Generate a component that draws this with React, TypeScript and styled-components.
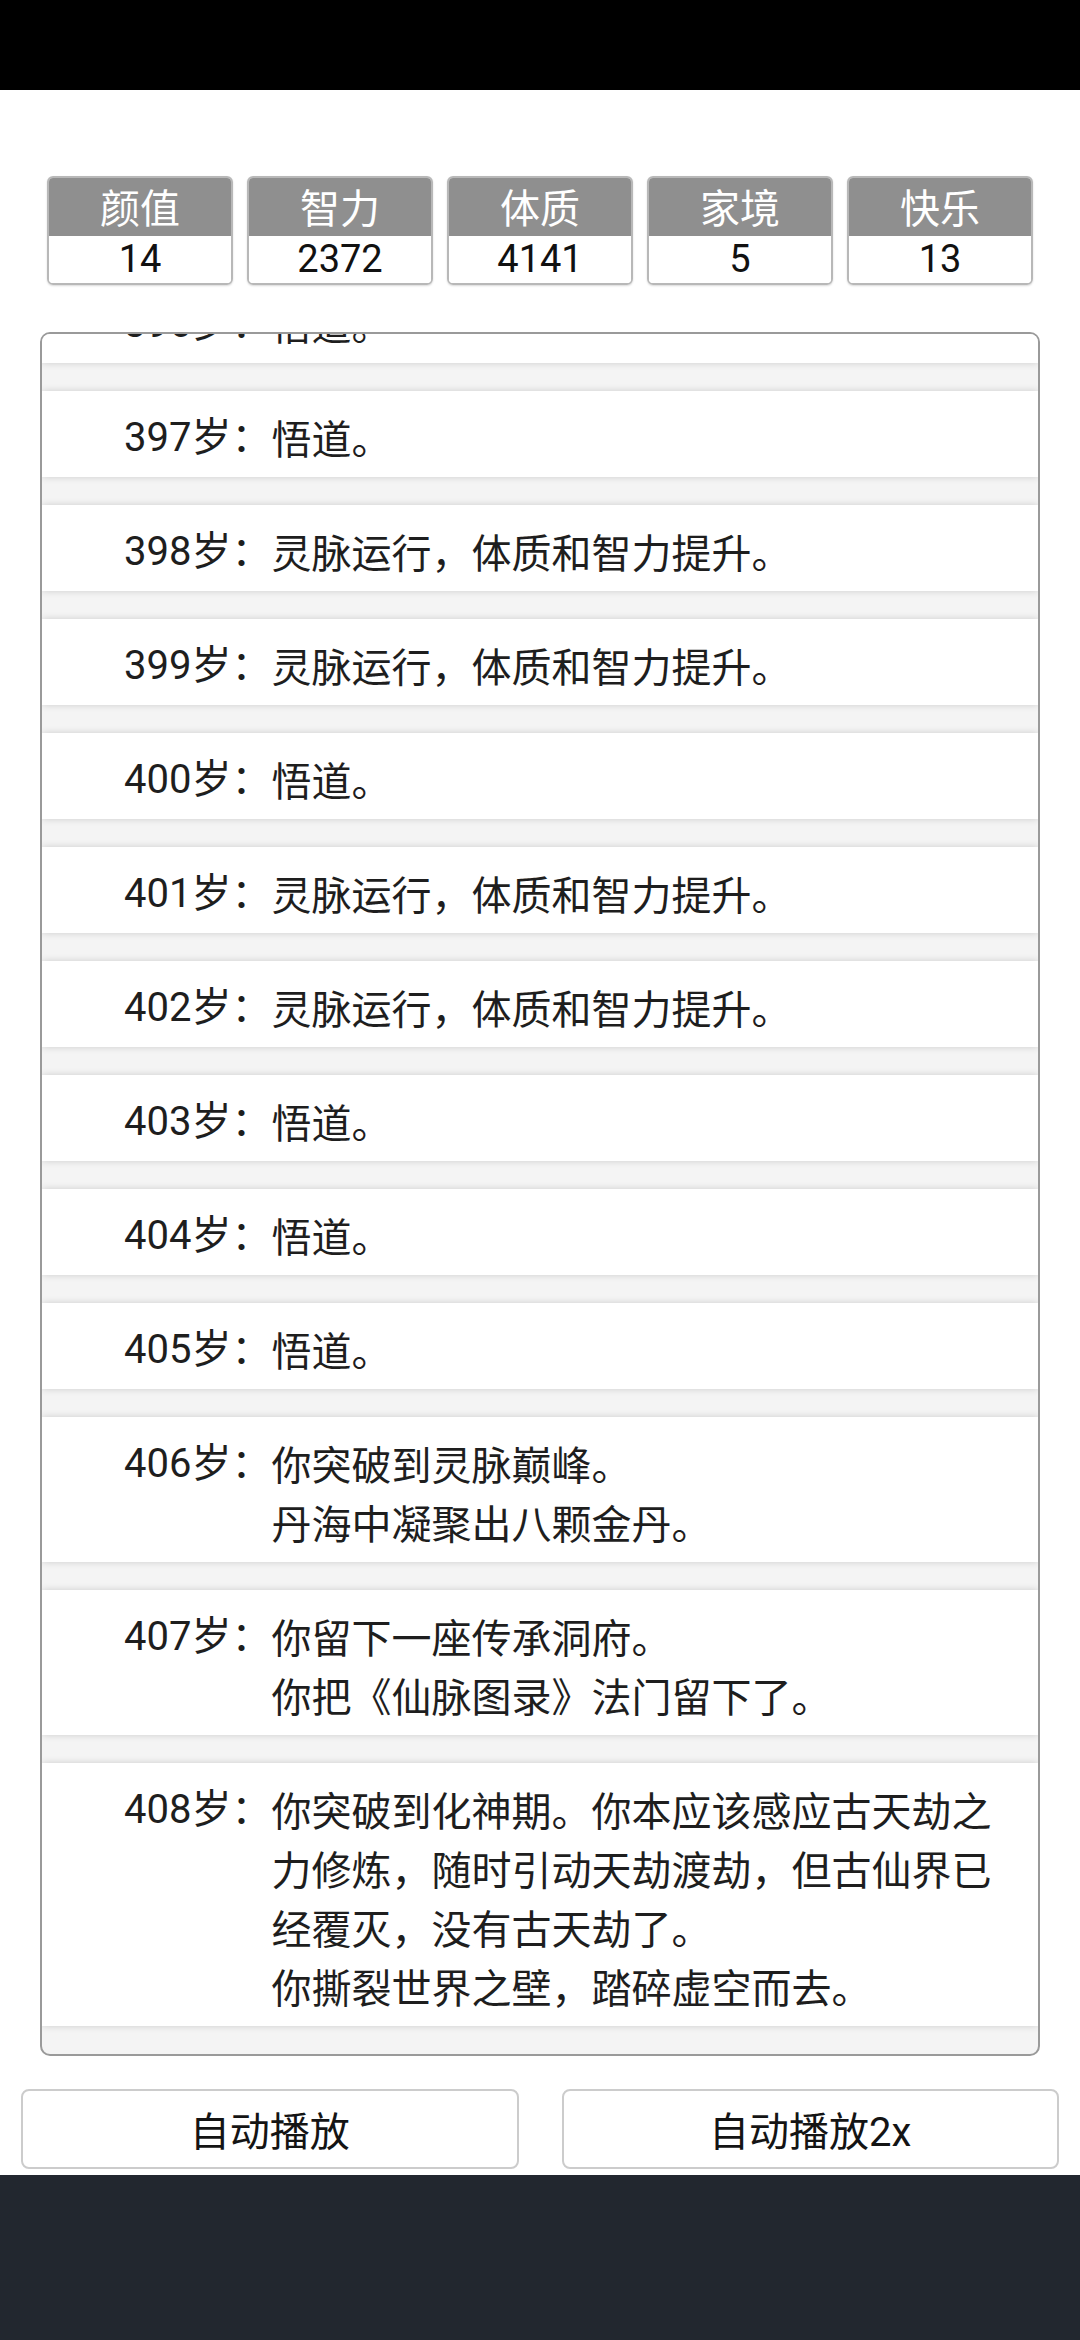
import React from "react";
import styled, { createGlobalStyle } from "styled-components";

const Global = createGlobalStyle`
  html, body { margin: 0; padding: 0; background: #ffffff; }
  body { font-family: Roboto, "Noto Sans CJK SC", "Noto Sans", sans-serif; }
  * { box-sizing: border-box; }
`;

const Page = styled.div`
  width: 1080px;
  height: 2340px;
  display: flex;
  flex-direction: column;
  background: #ffffff;
  overflow: hidden;
`;

const StatusBar = styled.div`
  height: 90px;
  flex: none;
  background: #000000;
`;

const StatsRow = styled.div`
  margin-top: 86px;
  padding: 0 47px;
  display: grid;
  grid-template-columns: repeat(5, 1fr);
  gap: 14px;
  flex: none;
`;

const StatBox = styled.div`
  height: 109px;
  border: 2px solid #b8b8b8;
  border-radius: 6px;
  overflow: hidden;
  display: flex;
  flex-direction: column;
  box-shadow: 0 1px 2px rgba(0, 0, 0, 0.15);
`;

const StatHead = styled.div`
  height: 58px;
  background: #8f8f8f;
  color: #ffffff;
  font-size: 40px;
  line-height: 56px;
  text-align: center;
  font-family: "Noto Sans CJK SC", sans-serif;
`;

const StatValue = styled.div`
  flex: 1;
  background: #ffffff;
  color: #111111;
  font-size: 38px;
  line-height: 47px;
  text-align: center;
  font-family: Roboto, "Noto Sans", sans-serif;
`;

const Panel = styled.div`
  margin: 47px 40px 0;
  height: 1724px;
  flex: none;
  border: 2px solid #9a9a9a;
  border-radius: 10px;
  background: #f4f4f4;
  overflow: hidden;
  display: flex;
  flex-direction: column;
  justify-content: flex-end;
  padding-bottom: 28px;
`;

const Entry = styled.div`
  flex: none;
  background: #ffffff;
  padding: 17px 20px 10px 82px;
  display: flex;
  font-size: 40px;
  line-height: 59px;
  color: #1e1e1e;
  box-shadow: 0 0 7px rgba(0, 0, 0, 0.16);
  & + & {
    margin-top: 28px;
  }
`;

const Age = styled.div`
  flex: none;
  white-space: nowrap;
  font-family: Roboto, "Noto Sans CJK SC", sans-serif;
`;

const Body = styled.div`
  flex: 1;
  font-family: "Noto Sans CJK SC", sans-serif;
`;

const Line = styled.div``;

const ButtonRow = styled.div`
  margin-top: 33px;
  padding: 0 21px;
  display: grid;
  grid-template-columns: 1fr 1fr;
  gap: 43px;
  flex: none;
`;

const Button = styled.button`
  height: 80px;
  background: #ffffff;
  border: 2px solid #cccccc;
  border-radius: 8px;
  font-size: 40px;
  color: #141414;
  font-family: Roboto, "Noto Sans CJK SC", sans-serif;
  padding: 0;
`;

const Footer = styled.div`
  margin-top: 6px;
  flex: 1;
  background: #22272f;
`;

const stats = [
  { name: "颜值", value: 14 },
  { name: "智力", value: 2372 },
  { name: "体质", value: 4141 },
  { name: "家境", value: 5 },
  { name: "快乐", value: 13 },
];

const G = "灵脉运行，体质和智力提升。";
const W = "悟道。";

const events: { age: number; lines: string[] }[] = [
  { age: 395, lines: [W] },
  { age: 396, lines: [W] },
  { age: 397, lines: [W] },
  { age: 398, lines: [G] },
  { age: 399, lines: [G] },
  { age: 400, lines: [W] },
  { age: 401, lines: [G] },
  { age: 402, lines: [G] },
  { age: 403, lines: [W] },
  { age: 404, lines: [W] },
  { age: 405, lines: [W] },
  { age: 406, lines: ["你突破到灵脉巅峰。", "丹海中凝聚出八颗金丹。"] },
  { age: 407, lines: ["你留下一座传承洞府。", "你把《仙脉图录》法门留下了。"] },
  {
    age: 408,
    lines: [
      "你突破到化神期。你本应该感应古天劫之力修炼，随时引动天劫渡劫，但古仙界已经覆灭，没有古天劫了。",
      "你撕裂世界之壁，踏碎虚空而去。",
    ],
  },
];

export default function App() {
  return (
    <>
      <Global />
      <Page>
        <StatusBar />
        <StatsRow>
          {stats.map((s) => (
            <StatBox key={s.name}>
              <StatHead>{s.name}</StatHead>
              <StatValue>{s.value}</StatValue>
            </StatBox>
          ))}
        </StatsRow>
        <Panel>
          {events.map((e) => (
            <Entry key={e.age}>
              <Age>{e.age}岁：</Age>
              <Body>
                {e.lines.map((l, i) => (
                  <Line key={i}>{l}</Line>
                ))}
              </Body>
            </Entry>
          ))}
        </Panel>
        <ButtonRow>
          <Button>自动播放</Button>
          <Button>自动播放2x</Button>
        </ButtonRow>
        <Footer />
      </Page>
    </>
  );
}
